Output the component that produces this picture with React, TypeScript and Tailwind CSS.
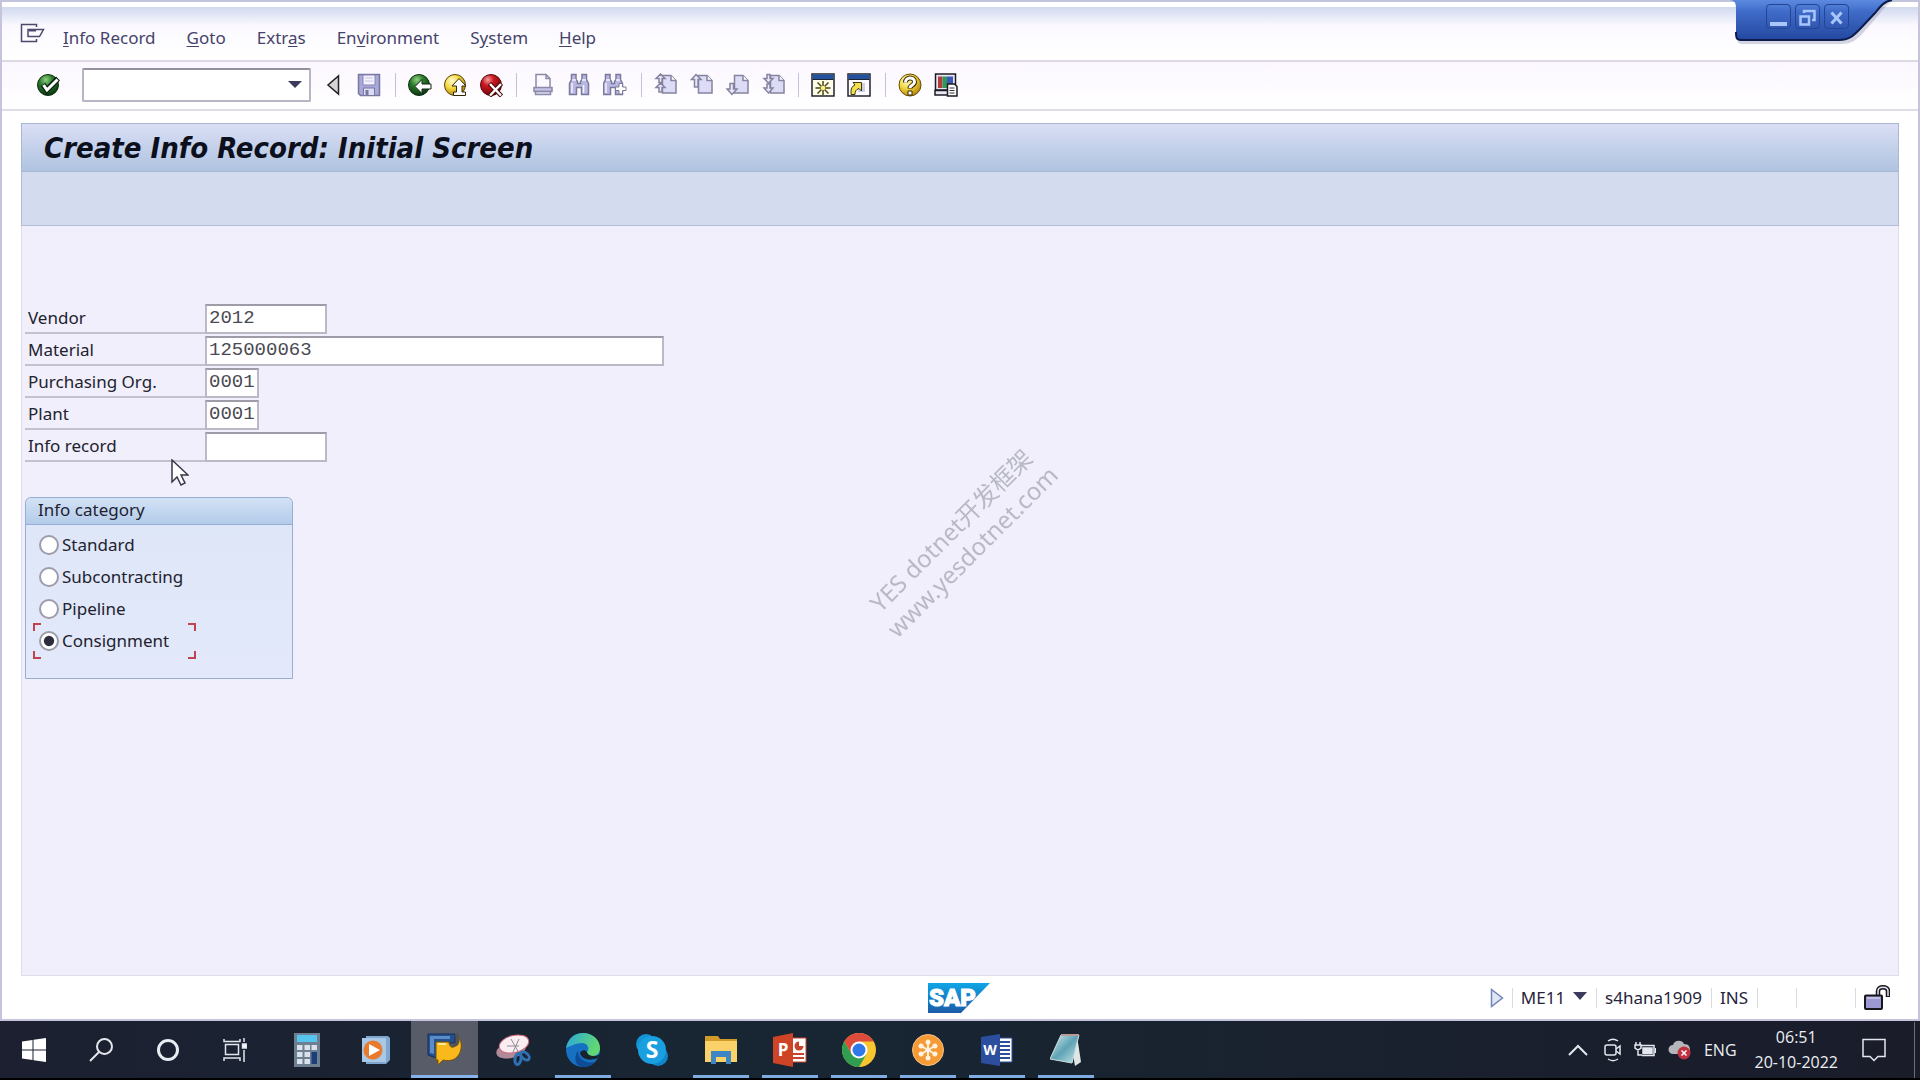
import type { ReactNode } from "react";

const menus = [
  { before: "", key: "I", after: "nfo Record" },
  { before: "", key: "G", after: "oto" },
  { before: "Extr", key: "a", after: "s" },
  { before: "En", key: "v", after: "ironment" },
  { before: "S", key: "y", after: "stem" },
  { before: "", key: "H", after: "elp" },
];

const fields = [
  { id: "vendor", label: "Vendor", value: "2012", width: "w-[122px]" },
  { id: "material", label: "Material", value: "125000063", width: "w-[459px]" },
  { id: "purchasing-org", label: "Purchasing Org.", value: "0001", width: "w-[54px]" },
  { id: "plant", label: "Plant", value: "0001", width: "w-[54px]" },
  { id: "info-record", label: "Info record", value: "", width: "w-[122px]" },
];

const categories = ["Standard", "Subcontracting", "Pipeline", "Consignment"];

function Svg({ children }: { children: ReactNode }) {
  return (
    <svg width="24" height="24" viewBox="0 0 24 24" fill="none" aria-hidden="true">
      {children}
    </svg>
  );
}

// Gradients shared by the toolbar and taskbar icons
function Defs() {
  return (
    <svg width="0" height="0" className="absolute" aria-hidden="true">
      <defs>
        <radialGradient id="green" cx="0.4" cy="0.25" r="0.8">
          <stop offset="0" stopColor="#8fd080" />
          <stop offset="0.4" stopColor="#2a7a2c" />
          <stop offset="1" stopColor="#06300c" />
        </radialGradient>
        <radialGradient id="yellow" cx="0.35" cy="0.3" r="0.8">
          <stop offset="0" stopColor="#fffbd0" />
          <stop offset="0.45" stopColor="#f2d83a" />
          <stop offset="1" stopColor="#a87808" />
        </radialGradient>
        <radialGradient id="red" cx="0.35" cy="0.25" r="0.8">
          <stop offset="0" stopColor="#f0a0a0" />
          <stop offset="0.35" stopColor="#cc1820" />
          <stop offset="1" stopColor="#6a0408" />
        </radialGradient>
        <linearGradient id="sap" x1="0" y1="0" x2="0" y2="1">
          <stop offset="0" stopColor="#0fa5e6" />
          <stop offset="1" stopColor="#1c5ca8" />
        </linearGradient>
        <linearGradient id="blob" x1="0" y1="0" x2="0" y2="1">
          <stop offset="0" stopColor="#5d8ae0" />
          <stop offset="0.3" stopColor="#3f6bc8" />
          <stop offset="1" stopColor="#2448a0" />
        </linearGradient>
        <linearGradient id="edge" x1="0" y1="0" x2="1" y2="0.3">
          <stop offset="0" stopColor="#2aa7de" />
          <stop offset="1" stopColor="#62d873" />
        </linearGradient>
        <linearGradient id="note" x1="0" y1="0" x2="1" y2="1">
          <stop offset="0" stopColor="#d8eef0" />
          <stop offset="0.5" stopColor="#5fa3b4" />
          <stop offset="1" stopColor="#c8e8ec" />
        </linearGradient>
      </defs>
    </svg>
  );
}

const CheckIcon = () => (
  <Svg>
    <circle cx="11" cy="12" r="10.5" fill="url(#green)" stroke="#0c2c10" />
    <path d="m6 11.500 4 5.500L21 5.500" stroke="#08200a" strokeWidth="5.5" />
    <path d="m6.500 12 3.500 5L20.500 6.500" stroke="#fff" strokeWidth="3" />
  </Svg>
);

const BackIcon = () => (
  <Svg>
    <circle cx="11" cy="12" r="10.5" fill="url(#green)" stroke="#0c2c10" />
    <path d="M7 13.500 14 6.500v4.500h9v5h-9v4.500Z" fill="#fff" stroke="#102010" />
  </Svg>
);

const UpIcon = () => (
  <Svg>
    <circle cx="11" cy="12" r="10.5" fill="url(#yellow)" stroke="#5a4208" />
    <path d="M15 5.500 22 13h-4v6h3.500v3.500h-12V19H12.500v-6H8Z" fill="#fff" stroke="#33270a" />
  </Svg>
);

const CancelIcon = () => (
  <Svg>
    <circle cx="11" cy="12" r="10.5" fill="url(#red)" stroke="#5a0508" />
    <path d="m9.500 10.500 12 12.500M21.500 10.500l-12 12.500" stroke="#4a0608" strokeWidth="4.5" />
    <path d="m10 11 11 11.500M21 11 10 22.500" stroke="#fff" strokeWidth="2.5" />
  </Svg>
);

const PlayLeftIcon = () => (
  <svg width="14" height="22" viewBox="0 0 14 22" aria-hidden="true">
    <path d="M12.500 2v18L2 11Z" fill="#d8d6d4" stroke="#222228" strokeWidth="1.5" />
  </svg>
);

const SaveIcon = () => (
  <Svg>
    <path d="M1.500 1.500h21v21H3.500l-2-2Z" fill="#a9a8d8" stroke="#77779f" strokeWidth="1.5" />
    <path d="M6 2h12v10H6Z" fill="#f5f2ff" stroke="#8685b5" />
    <path d="M8 5h8M8 8h8" stroke="#c5c3e5" />
    <path d="M6.500 15h11v7.500h-11Z" fill="#dddcf4" stroke="#77779f" />
    <path d="M8.500 17h3v5h-3Z" fill="#77779f" />
  </Svg>
);

const PrintIcon = () => (
  <Svg>
    <path d="M5 14V1.500h10l4 4V14" fill="#fbf9ff" stroke="#8c8aa8" strokeWidth="1.5" />
    <path d="M15 1.500v4h4" stroke="#8c8aa8" strokeWidth="1.5" />
    <path d="M3 14.500h18v4H3Z" fill="#c6c4ea" stroke="#8c8aa8" strokeWidth="1.5" />
    <path d="M4.500 18.500h15v3h-15Z" fill="#dedcf4" stroke="#8c8aa8" strokeWidth="1.5" />
  </Svg>
);

const binoculars =
  "M4.500 1.500h4.500v5l1.500 2v2h3v-2l1.500-2v-5h4.500v5l2 4v11h-7v-7h-5v7h-7v-11l2-4Z";

const FindIcon = () => (
  <Svg>
    <path d={binoculars} fill="#b9b8e2" stroke="#7c7a9c" strokeWidth="1.5" />
    <path d="M5 7h4M15 7h4M5 10v10M16.500 12v8" stroke="#f3f1ff" strokeWidth="1.5" />
  </Svg>
);

const FindNextIcon = () => (
  <Svg>
    <g transform="translate(-2 0)">
      <path d={binoculars} fill="#b9b8e2" stroke="#7c7a9c" strokeWidth="1.5" />
      <path d="M5 7h4M15 7h4M5 10v10" stroke="#f3f1ff" strokeWidth="1.5" />
    </g>
    <path d="M16 10.500h3.500v3.500H23v3.500h-3.500V21H16v-3.500h-3.500V14H16Z" fill="#fff" stroke="#7c7a9c" />
  </Svg>
);

function PageIcon({ kind }: { kind: "first" | "prev" | "next" | "last" }) {
  const arrows = {
    first: "M6.500 1 11 5.500H8v4H5v-4H2ZM6.500 10 11 14.500H8v4.500H5v-4.500H2Z",
    prev: "M6 1.500 11 6.500H8V14H4.500V6.500H1.500Z",
    next: "M4 10.500h3.500V16H11l-5 5.500L1 16h3Z",
    last: "M5 1.500h3v4h3L6.500 10 2 5.500h3ZM5 11h3v4h3l-4.500 5L2 15h3Z",
  };
  return (
    <Svg>
      <path d="M8.500 2.500h8.500l5 5v12.500H8.500Z" fill="#dddcf6" stroke="#85839f" strokeWidth="1.5" />
      <path d="M17 2.500v5h5" fill="#fff" stroke="#85839f" strokeWidth="1.5" />
      <path d={arrows[kind]} fill="#e9e8fb" stroke="#85839f" strokeWidth="1.5" />
    </Svg>
  );
}

const SessionIcon = () => (
  <Svg>
    <path d="M1 1h22v22H1Z" fill="#fffdea" stroke="#20242c" strokeWidth="1.5" />
    <path d="M1.500 1.500h21V6h-21Z" fill="#2450a0" />
    <path d="M1.500 6.500h21" stroke="#20242c" />
    <path
      d="M12 8v5M12 16.500V22M4.500 15H10M14 15h5.500M6.500 9.500l4 4M17.500 9.500l-4 4M6.500 20.500l4-4M17.500 20.500l-4-4"
      stroke="#4a4512"
      strokeWidth="1.5"
    />
    <circle cx="12" cy="15" r="2" fill="#fff36a" />
  </Svg>
);

const ShortcutIcon = () => (
  <Svg>
    <path d="M1 1h22v22H1Z" fill="#fdfbff" stroke="#20242c" strokeWidth="1.5" />
    <path d="M1.500 1.500h21V6h-21Z" fill="#2450a0" />
    <path d="M1.500 6.500h21" stroke="#20242c" />
    <path d="M13 10h5v9h-7Z" fill="#cfcde8" />
    <path d="M4 21.500v-3c0-3.500 1.500-5.500 4-6.500L6 9.500h8.500V18L12 15.500c-3 1-4 3-4 6Z" fill="#f2e04a" stroke="#3a3810" />
  </Svg>
);

const HelpIcon = () => (
  <Svg>
    <circle cx="12" cy="12" r="11" fill="url(#yellow)" stroke="#6a4c08" />
    <path d="M7.500 9.500c0-6 9-6 9-.5 0 3.500-4.500 3-4.500 6.500" stroke="#3a2a06" strokeWidth="5" />
    <path d="M7.500 9.500c0-6 9-6 9-.5 0 3.500-4.500 3-4.500 6" stroke="#fff" strokeWidth="3" />
    <path d="M10 18h4v4h-4Z" fill="#fff" stroke="#3a2a06" />
  </Svg>
);

const LayoutIcon = () => (
  <Svg>
    <path d="M1.500 1h20v16h-20Z" fill="#e8e6f4" stroke="#1c1c22" strokeWidth="1.5" />
    <path d="M4 3.500h4.500V15H4Z" fill="#b43c3c" />
    <path d="M8.500 3.500H13V15H8.500Z" fill="#2f9a58" />
    <path d="M13 3.500h6V15h-6Z" fill="#3a58b8" />
    <path d="M1 17.500h13V22H1Z" fill="#e8e6f4" stroke="#1c1c22" strokeWidth="1.5" />
    <path d="M13.500 11h7l2.500 2.500V23h-9.500Z" fill="#fff" stroke="#1c1c22" strokeWidth="1.5" />
    <path d="M15.500 15h5M15.500 17.500h5M15.500 20h5" stroke="#33333b" />
  </Svg>
);

const MenuIcon = () => (
  <svg width="26" height="22" viewBox="0 0 26 22" fill="none" aria-hidden="true">
    <path d="M16.500 4V1.500h-15v17h15V16" stroke="#4c4a6c" strokeWidth="1.5" />
    <path d="M8 13.500V6.500h15.500L19.500 13.500Z" stroke="#4c4a6c" strokeWidth="1.5" />
    <path d="M9 6.500h7v2H9Z" fill="#4c4a6c" />
  </svg>
);

const SapLogo = () => (
  <svg width="62" height="30" viewBox="0 0 62 30" role="img" aria-label="SAP">
    <path d="M0 0h62L33 30H0Z" fill="url(#sap)" />
    <text
      x="1"
      y="23"
      fontFamily="Roboto, sans-serif"
      fontWeight="900"
      fontSize="24"
      fill="#fff"
      stroke="#fff"
      strokeWidth="1"
    >
      SAP
    </text>
  </svg>
);

const LockIcon = () => (
  <svg width="26" height="25" viewBox="0 0 26 25" fill="none" aria-hidden="true">
    <path d="M14 11V6c0-5 10-5 10 0v6" stroke="#16161c" strokeWidth="4.5" />
    <path d="M14 11V6c0-5 10-5 10 0v5" stroke="#e4e2f4" strokeWidth="1.5" />
    <rect x="1" y="10.5" width="17" height="13.5" rx="1" fill="#9c98d0" stroke="#16161c" strokeWidth="2" />
    <path d="M3 13h13" stroke="#d0cef0" strokeWidth="1.5" />
  </svg>
);

const Divider = ({ tall = false }: { tall?: boolean }) => (
  <span className={tall ? "h-6 w-px bg-[#c3c1d8]" : "h-5 w-px bg-[#dcd8e6]"} />
);

function ToolButton({ label, children }: { label: string; children: ReactNode }) {
  return (
    <button type="button" aria-label={label} className="flex shrink-0 items-center justify-center">
      {children}
    </button>
  );
}

function WindowButtons() {
  return (
    <div className="absolute -top-0.5 right-6">
      <svg width="164" height="48" viewBox="0 0 164 48" aria-hidden="true">
        <path d="M2 0c6 1 5 5 5 12v26c0 5 2 6 6 6h98c12 0 16-5 22-11l14-16c6-7 10-14 17-16Z" fill="#8a8aa8" opacity="0.35" />
        <path d="M0 0c6 1 6 4 6 10v24c0 5 1 6 6 6h97c10 0 14-4 20-10l16-17c5-6 9-12 17-13Z" fill="url(#blob)" />
        <path d="M6 32c0 7 1 8 6 8h97c10 0 14-4 20-10l16-17c5-6 9-12 17-13" fill="none" stroke="#0c1c4c" strokeWidth="2" />
      </svg>
      <div className="absolute top-1 left-9 flex gap-1">
        <button type="button" aria-label="Minimize" className="h-[25px] w-[25px] rounded-sm border border-[#234594]">
          <svg width="23" height="22" viewBox="0 0 23 22" aria-hidden="true">
            <path d="M3 16h17v4H3Z" fill="#a9c6fb" />
          </svg>
        </button>
        <button type="button" aria-label="Restore" className="h-[25px] w-[25px] rounded-sm border border-[#234594]">
          <svg width="23" height="22" viewBox="0 0 23 22" fill="none" stroke="#a9c6fb" aria-hidden="true">
            <path d="M8 7V5h10.500v9H16" strokeWidth="2.5" />
            <path d="M4.500 10.500h8.500v8H4.500Z" strokeWidth="2.5" />
          </svg>
        </button>
        <button type="button" aria-label="Close" className="h-[25px] w-[25px] rounded-sm border border-[#234594]">
          <svg width="23" height="22" viewBox="0 0 23 22" fill="none" stroke="#a9c6fb" aria-hidden="true">
            <path d="m6.500 6.500 10 11M16.500 6.500l-10 11" strokeWidth="3" />
          </svg>
        </button>
      </div>
    </div>
  );
}

function MenuBar() {
  return (
    <header className="relative border-t-2 border-[#c2c4dc]">
      <div className="h-[5px] bg-white" />
      <nav className="flex h-[55px] items-center border-b-2 border-[#dcdae6] bg-linear-to-b from-[#d0d9ee] via-[#fbf9ff] via-35% to-white pt-2 pl-[18px] text-[17px] text-[#45436a]">
        <button type="button" aria-label="Menu" className="mr-[17px] mb-2">
          <MenuIcon />
        </button>
        <div className="flex gap-[31px]">
          {menus.map((menu) => (
            <button type="button" key={menu.key}>
              {menu.before}
              <u className="underline-offset-2">{menu.key}</u>
              {menu.after}
            </button>
          ))}
        </div>
      </nav>
      <WindowButtons />
    </header>
  );
}

function ToolBar() {
  return (
    <div className="flex h-[49px] items-center border-b-2 border-[#dedce6] bg-linear-to-b from-[#fcf7ff] to-white pb-0.5 pl-[35px]">
      <ToolButton label="Enter"><CheckIcon /></ToolButton>
      <div className="relative ml-[21px] flex">
        <input
          aria-label="Command"
          className="h-[34px] w-[229px] rounded-xs border-2 border-[#b9b5c4] border-t-[#94909e] bg-white px-2 text-[17px] outline-none"
        />
        <svg className="absolute top-3 right-[9px]" width="14" height="9" viewBox="0 0 14 9" aria-hidden="true">
          <path d="M0 1h14L7 8Z" fill="#3c3a5c" />
        </svg>
      </div>
      <div className="ml-[15px] flex items-center gap-[17px]">
        <ToolButton label="Collapse"><PlayLeftIcon /></ToolButton>
        <ToolButton label="Save"><SaveIcon /></ToolButton>
      </div>
      <div className="ml-[14px] flex items-center gap-3">
        <Divider tall />
        <ToolButton label="Back"><BackIcon /></ToolButton>
        <ToolButton label="Exit"><UpIcon /></ToolButton>
        <ToolButton label="Cancel"><CancelIcon /></ToolButton>
        <Divider tall />
      </div>
      <div className="ml-[14px] flex items-center gap-3">
        <ToolButton label="Print"><PrintIcon /></ToolButton>
        <ToolButton label="Find"><FindIcon /></ToolButton>
        <ToolButton label="Find next"><FindNextIcon /></ToolButton>
      </div>
      <div className="ml-[14px] flex items-center gap-3">
        <Divider tall />
        <ToolButton label="First page"><PageIcon kind="first" /></ToolButton>
        <ToolButton label="Previous page"><PageIcon kind="prev" /></ToolButton>
        <ToolButton label="Next page"><PageIcon kind="next" /></ToolButton>
        <ToolButton label="Last page"><PageIcon kind="last" /></ToolButton>
        <Divider tall />
        <ToolButton label="New session"><SessionIcon /></ToolButton>
        <ToolButton label="Create shortcut"><ShortcutIcon /></ToolButton>
      </div>
      <div className="ml-[14px] flex items-center gap-3">
        <Divider tall />
        <ToolButton label="Help"><HelpIcon /></ToolButton>
        <ToolButton label="Customize layout"><LayoutIcon /></ToolButton>
      </div>
    </div>
  );
}

// Red brackets around the focused radio button
function FocusFrame() {
  return (
    <span className="pointer-events-none absolute -top-0.5 -left-1.5 h-9 w-[163px]">
      <span className="absolute top-0 left-0 size-2 border-t-2 border-l-2 border-[#c04450]" />
      <span className="absolute top-0 right-0 size-2 border-t-2 border-r-2 border-[#c04450]" />
      <span className="absolute bottom-0 left-0 size-2 border-b-2 border-l-2 border-[#c04450]" />
      <span className="absolute right-0 bottom-0 size-2 border-r-2 border-b-2 border-[#c04450]" />
    </span>
  );
}

function InfoCategory() {
  return (
    <fieldset className="mt-[35px] ml-[3px] h-[182px] w-[268px] rounded-t-md border border-[#95aed2] bg-linear-to-b from-[#dde6f8] to-[#e3e9fa]">
      <legend className="float-left flex h-[27px] w-full items-center rounded-t-md border-b border-[#95aed2] bg-linear-to-b from-[#d3e2f6] to-[#b3cbea] pb-0.5 pl-3">
        Info category
      </legend>
      <div className="clear-both flex flex-col pt-1 pl-[13px]">
        {categories.map((name) => (
          <label key={name} className="relative flex h-8 w-fit items-center gap-[3px]">
            <input
              type="radio"
              name="category"
              defaultChecked={name === "Consignment"}
              className="size-5 appearance-none rounded-full border-2 border-[#9d9cab] bg-white bg-radial checked:from-[#2c2c3c] checked:from-40% checked:to-white checked:to-50%"
            />
            {name}
            {name === "Consignment" && <FocusFrame />}
          </label>
        ))}
      </div>
    </fieldset>
  );
}

function Fields() {
  return (
    <div className="flex flex-col pl-[3px]">
      {fields.map((field) => (
        <div key={field.id} className="flex h-8 items-end">
          <label htmlFor={field.id} className="flex h-[30px] w-[180px] items-center border-b-2 border-[#c3c0cf] pl-[3px]">
            {field.label}
          </label>
          <input
            id={field.id}
            defaultValue={field.value}
            className={`${field.width} h-[30px] border-2 border-[#bdb8c6] border-t-[#a09ba8] bg-white px-0.5 pb-0.5 font-['Liberation_Mono',monospace] text-[19px] text-[#4a4a52] outline-none`}
          />
        </div>
      ))}
    </div>
  );
}

function StatusBar() {
  return (
    <footer className="relative flex h-[43px] items-center justify-end gap-2 pr-7 text-[17px] text-[#26243a]">
      <div className="absolute left-[926px]">
        <SapLogo />
      </div>
      <svg width="14" height="20" viewBox="0 0 14 20" aria-hidden="true">
        <path d="M1.500 1.500v17L12.500 10Z" fill="#dfe6f6" stroke="#7186b8" strokeWidth="1.5" />
      </svg>
      <Divider />
      <button type="button" className="mr-px flex items-center gap-2">
        ME11
        <svg width="14" height="8" viewBox="0 0 14 8" className="mb-1" aria-hidden="true">
          <path d="M0 0h14L7 8Z" fill="#3c3a5c" />
        </svg>
      </button>
      <Divider />
      <span className="mr-px">s4hana1909</span>
      <Divider />
      <span className="mr-px">INS</span>
      <Divider />
      <span className="w-[22px]" />
      <Divider />
      <span className="w-[42px]" />
      <Divider />
      <LockIcon />
    </footer>
  );
}

const apps: { name: string; state?: "open" | "active"; icon: ReactNode }[] = [
  {
    name: "Calculator",
    icon: (
      <svg width="26" height="34" viewBox="0 0 26 34">
        <path d="M0 0h26v34H0Z" fill="#6f7f92" />
        <path d="M3 2h20v7H3Z" fill="#55c4ee" />
        <path
          d="M3 12h5.500v5H3Zm7.500 0H16v5h-5.500Zm7 0H23v5h-5.500ZM3 19h5.500v5H3Zm7.500 0H16v5h-5.500ZM3 26h5.500v5H3Zm7.500 0H16v5h-5.500Z"
          fill="#dbe2ee"
        />
        <path d="M17.500 19H23v12h-5.500Z" fill="#1c3f7c" />
      </svg>
    ),
  },
  {
    name: "Media player",
    icon: (
      <svg width="28" height="28" viewBox="0 0 28 28">
        <path d="M4 0h22l2 2v22l-4 4H4Z" fill="#7ea6cf" />
        <path d="M0 2h24v24H0Z" fill="#a9c8e6" />
        <circle cx="11" cy="14" r="9.5" fill="#e87a2c" />
        <path d="m7 8 11 6-11 6Z" fill="#fff" />
      </svg>
    ),
  },
  {
    name: "SAP Logon",
    state: "active",
    icon: (
      <svg width="36" height="34" viewBox="0 0 36 34">
        <path d="M1 1h27v9H12v16L1 22Z" fill="#24508e" stroke="#142c58" />
        <path d="M3 3h20v3H7v15l-4-1Z" fill="#5b8cc8" />
        <path d="M9 9h13c0 7 7 7 8 0l1-6c5 6 4 16-1 21-4 4-9 4-14 3l-5 5V27H9Z" fill="#f9b91a" stroke="#7a5206" />
        <path d="M29 1c4 5 2 12-3 11" stroke="#55534e" strokeWidth="3" fill="none" />
        <path d="M11 11h8" stroke="#fde69a" strokeWidth="2" />
      </svg>
    ),
  },
  {
    name: "Snipping Tool",
    icon: (
      <svg width="36" height="32" viewBox="0 0 36 32">
        <ellipse cx="15" cy="16" rx="15" ry="8" fill="#b08a98" transform="rotate(-14 15 16)" />
        <ellipse cx="18" cy="10" rx="15" ry="8.5" fill="#fbeef2" stroke="#d06a7c" transform="rotate(-14 18 10)" />
        <path d="m15 5 8 14M23 5l-6 13M11 12h12" stroke="#8c8c94" fill="none" />
        <ellipse cx="22" cy="25" rx="3" ry="5.5" fill="none" stroke="#2f6fb4" strokeWidth="3" transform="rotate(10 22 25)" />
        <ellipse cx="29" cy="22" rx="3" ry="5" fill="none" stroke="#2f6fb4" strokeWidth="3" transform="rotate(-50 29 22)" />
      </svg>
    ),
  },
  {
    name: "Edge",
    state: "open",
    icon: (
      <svg width="34" height="34" viewBox="0 0 34 34">
        <circle cx="17" cy="17" r="17" fill="#1671c2" />
        <path d="M0 15C2 5 9 0 17 0c10 0 17 7 17 15 0 5-3 8-8 8-4 0-6-2-5-4 3-3 1-9-5-9C9 10 3 14 0 15Z" fill="url(#edge)" />
        <path d="M12 18c0 8 7 13 17 11-3 4-8 5-12 5C8 34 8 22 12 18Z" fill="#0e4c98" />
        <path d="M21 19c-2-3-6-2-7 1 1 5 8 9 18 5l2-4c-3 3-12 3-13-2Z" fill="#19222f" />
      </svg>
    ),
  },
  {
    name: "Skype",
    icon: (
      <svg width="32" height="32" viewBox="0 0 32 32">
        <circle cx="10" cy="10" r="10" fill="#1492d4" />
        <circle cx="22" cy="22" r="10" fill="#0f86ca" />
        <circle cx="16" cy="16" r="14" fill="#1a9fe0" />
        <text x="16" y="24" textAnchor="middle" fontFamily="Open Sans, sans-serif" fontWeight="700" fontSize="23" fill="#fff">S</text>
      </svg>
    ),
  },
  {
    name: "File Explorer",
    state: "open",
    icon: (
      <svg width="32" height="28" viewBox="0 0 32 28">
        <path d="M0 0h13l2 3h17v6H0Z" fill="#d29a28" />
        <path d="M0 5h32v21H0Z" fill="#fbd26a" />
        <path d="M6 28V15h20v13h-5v-7H11v7Z" fill="#3f87c4" />
      </svg>
    ),
  },
  {
    name: "PowerPoint",
    state: "open",
    icon: (
      <svg width="34" height="34" viewBox="0 0 34 34">
        <path d="M18 5h15v24H18Z" fill="#fff" stroke="#c8432a" />
        <circle cx="26" cy="13" r="4.5" fill="#c8432a" />
        <path d="M26 13V8a5 5 0 0 1 5 5Z" fill="#fff" />
        <path d="M20 21h11M20 25h11" stroke="#c8432a" strokeWidth="2" />
        <path d="M0 4 20 0v34L0 30Z" fill="#cd4427" />
        <text x="10" y="23" textAnchor="middle" fontFamily="Open Sans, sans-serif" fontWeight="700" fontSize="17" fill="#fff">P</text>
      </svg>
    ),
  },
  {
    name: "Chrome",
    state: "open",
    icon: (
      <svg width="34" height="34" viewBox="0 0 34 34">
        <circle cx="17" cy="17" r="17" fill="#f7c52e" />
        <path d="M17 8.500h14.700A17 17 0 0 0 2.300 8.500L9.600 21.200Z" fill="#dd4b3c" />
        <path d="M2.300 8.500A17 17 0 0 0 17 34l7.400-12.700H9.600Z" fill="#2f9e50" />
        <circle cx="17" cy="17" r="8.5" fill="#fff" />
        <circle cx="17" cy="17" r="6.5" fill="#2f78ea" />
      </svg>
    ),
  },
  {
    name: "GoTo",
    state: "open",
    icon: (
      <svg width="32" height="32" viewBox="0 0 32 32">
        <circle cx="16" cy="16" r="15.5" fill="#f59a34" stroke="#f5c48a" />
        {[0, 60, 120, 180, 240, 300].map((angle) => (
          <g key={angle} transform={`rotate(${angle} 16 16)`}>
            <path d="M16 16V8" stroke="#fff3e0" strokeWidth="2" />
            <circle cx="16" cy="8" r="2.5" fill="#fff3e0" />
          </g>
        ))}
        <circle cx="16" cy="16" r="2.5" fill="#fff3e0" />
      </svg>
    ),
  },
  {
    name: "Word",
    state: "open",
    icon: (
      <svg width="32" height="32" viewBox="0 0 32 32">
        <path d="M17 4h14v24H17Z" fill="#fff" stroke="#2c4f9c" />
        <path d="M19 8h10M19 12h10M19 16h10M19 20h10M19 24h10" stroke="#2c4f9c" strokeWidth="2" />
        <path d="M0 3 19 0v32L0 29Z" fill="#2b4f9e" />
        <text x="9" y="21" textAnchor="middle" fontFamily="Open Sans, sans-serif" fontWeight="700" fontSize="14" fill="#fff">W</text>
      </svg>
    ),
  },
  {
    name: "Notepad",
    state: "open",
    icon: (
      <svg width="32" height="32" viewBox="0 0 32 32">
        <path d="M27 2 31 28l-6 4L20 4Z" fill="#dfe6e4" />
        <path d="M11 1h18L22 29 0 25Z" fill="url(#note)" stroke="#cfe0e2" />
        <path d="M11 1h18" stroke="#b89a98" strokeWidth="2" />
      </svg>
    ),
  },
];

function SystemButton({ label, children }: { label: string; children: ReactNode }) {
  return (
    <button type="button" aria-label={label} className="flex h-full w-[67px] items-center justify-center">
      {children}
    </button>
  );
}

function TaskBar() {
  return (
    <div className="flex h-[59px] items-stretch border-b-2 border-black bg-linear-to-r from-[#1c2030] via-[#182633] via-40% to-[#1a1c2a] text-[#eceff4]">
      <div className="mr-[5px] flex">
        <SystemButton label="Start">
          <svg width="24" height="24" viewBox="0 0 24 24" fill="#fff">
            <path d="M0 3.500 10.500 2v9.500H0ZM11.500 1.800 24 0v11.500H11.500ZM0 12.500h10.500V22L0 20.500ZM11.500 12.500H24V24l-12.500-1.800Z" />
          </svg>
        </SystemButton>
        <SystemButton label="Search">
          <svg width="24" height="24" viewBox="0 0 24 24" fill="none" stroke="#e4e8ee" strokeWidth="2">
            <circle cx="15.5" cy="8.5" r="7.5" />
            <path d="m10 14-9 9" />
          </svg>
        </SystemButton>
        <SystemButton label="Cortana">
          <svg width="24" height="24" viewBox="0 0 24 24" fill="none">
            <circle cx="12" cy="12" r="9.5" stroke="#e8edf2" strokeWidth="3" />
          </svg>
        </SystemButton>
        <SystemButton label="Task View">
          <svg width="24" height="24" viewBox="0 0 24 24" fill="none" stroke="#e4e8ee" strokeWidth="1.5">
            <path d="M2.500 6.500h13v10h-13ZM1 1v2.500h16V1M1 23v-3h16v3M21 0v4M21 12v12" />
            <path d="M19.500 6h4v4h-4Z" fill="#fff" />
          </svg>
        </SystemButton>
      </div>
      <div className="flex gap-0.5">
        {apps.map((app) => (
          <button
            type="button"
            key={app.name}
            aria-label={app.name}
            className={`flex w-[67px] flex-col items-center ${app.state === "active" ? "bg-[#575c68]" : ""}`}
          >
            <span className="flex flex-1 items-center pt-[3px]">{app.icon}</span>
            <span
              className={
                app.state === "active"
                  ? "h-[3px] w-full bg-[#86b4ea]"
                  : app.state === "open"
                    ? "h-[3px] w-14 bg-[#7fade2]"
                    : "h-[3px]"
              }
            />
          </button>
        ))}
      </div>
      <div className="ml-auto flex items-center font-['Open_Sans',sans-serif] text-[16px]">
        <div className="flex items-center gap-3">
          <svg className="mr-1" width="20" height="12" viewBox="0 0 20 12" fill="none" stroke="#e4e8ee" strokeWidth="2">
            <path d="m1 11 9-9 9 9" />
          </svg>
          <svg width="18" height="24" viewBox="0 0 18 24" fill="none" stroke="#e4e8ee" strokeWidth="1.5">
            <path d="M4 3c3-2 7-2 10 0M4 21c3 2 7 2 10 0" />
            <rect x="1" y="7" width="11" height="10" rx="2" />
            <path d="m12 11 4-3v8l-4-3" />
          </svg>
          <svg width="22" height="16" viewBox="0 0 22 16" fill="none" stroke="#e4e8ee" strokeWidth="1.5">
            <path d="M7 3.500h13v10H8" />
            <path d="M9 6h9v5.500H9ZM21.500 6v5" fill="#e4e8ee" />
            <path d="M2 0v3M6 0v3M1 3h6v3L4 8 1 6ZM4 8v5h4" />
          </svg>
          <svg width="24" height="20" viewBox="0 0 24 20">
            <path d="M5 14a4.500 4.500 0 0 1 0-9c1-5 9-6 11-1 5 0 6 3 6 6v4Z" fill="#b4b6bc" />
            <circle cx="16" cy="13" r="6.5" fill="#c03040" />
            <path d="m13.500 10.500 5 5M18.500 10.500l-5 5" stroke="#fff" strokeWidth="1.5" />
          </svg>
          <span>ENG</span>
        </div>
        <time className="ml-[18px] text-center leading-[25px]">
          06:51
          <br />
          20-10-2022
        </time>
        <button type="button" aria-label="Notifications" className="ml-6">
          <svg width="24" height="24" viewBox="0 0 24 24" fill="none" stroke="#e4e8ee" strokeWidth="1.5">
            <path d="M1 1.500h22v17h-7L12 22.500l-4-4H1Z" />
          </svg>
        </button>
        <span className="ml-7 h-14 w-px bg-[#69707c]" />
        <span className="w-[5px]" />
      </div>
    </div>
  );
}

export default function App() {
  return (
    <div className="flex min-h-screen flex-col bg-white font-['Noto_Sans',sans-serif] text-[17px] text-[#22222e]">
      <Defs />
      <div className="flex flex-1 flex-col border-x-2 border-b-2 border-[#c6c4dc]">
        <MenuBar />
        <ToolBar />
        <main className="mx-[19px] flex flex-1 flex-col pt-3">
          <div className="flex h-[49px] items-center border border-[#a9b7d4] bg-linear-to-b from-[#dadff5] to-[#afc3e0] pl-[22px]">
            <h1 className="font-['DejaVu_Sans_Condensed','DejaVu_Sans',sans-serif] text-[29px] leading-10 font-bold text-[#0c0f1c] italic">
              Create Info Record: Initial Screen
            </h1>
          </div>
          <div className="h-[54px] border border-t-0 border-[#b3bcd6] bg-[#d3dcee]" />
          <form className="flex-1 border border-t-0 border-[#dedcec] bg-[#f0effb] pt-[76px]">
            <Fields />
            <InfoCategory />
          </form>
        </main>
        <StatusBar />
      </div>
      <TaskBar />
      <svg className="absolute top-[459px] left-[171px]" width="18" height="28" viewBox="0 0 18 28" aria-hidden="true">
        <path d="M1 1v22l5-5 4 8 4-2-4-8h7Z" fill="#fff" stroke="#3a3848" strokeWidth="1.5" />
      </svg>
      <div className="pointer-events-none fixed inset-0 flex items-center justify-center pt-0.5 pl-1">
        <p className="-rotate-45 text-center font-['Noto_Sans','Noto_Sans_CJK_SC',sans-serif] text-[24px] leading-[30px] text-[#b9b8c6]">
          YES dotnet开发框架
          <br />
          www.yesdotnet.com
        </p>
      </div>
    </div>
  );
}
